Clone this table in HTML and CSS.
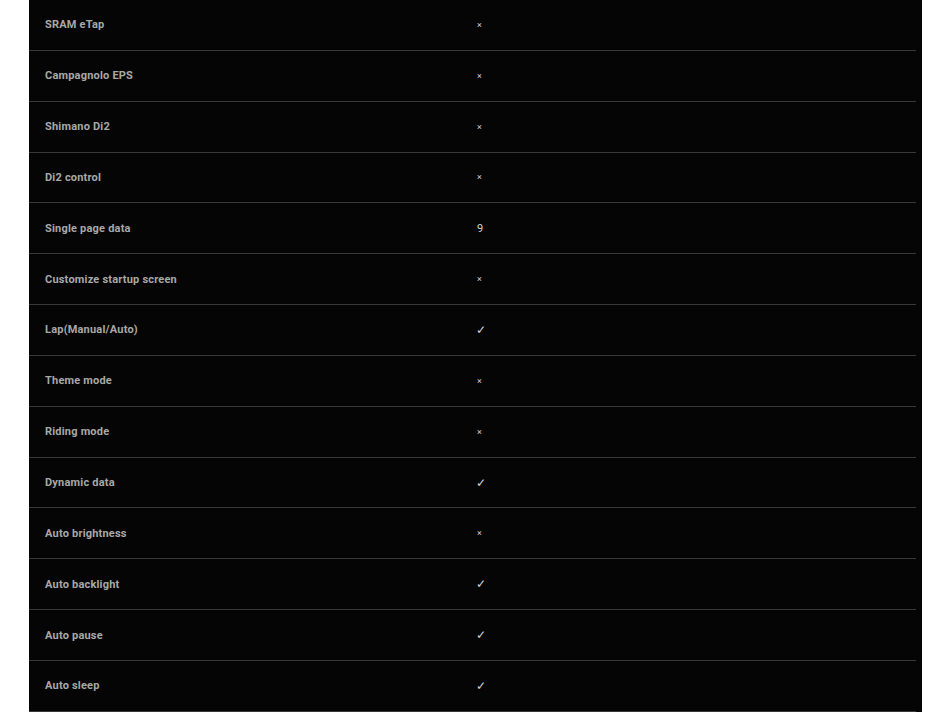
FILE: index.html
```html
<!DOCTYPE html>
<html lang="en">
<head>
    <meta charset="utf-8">
    <link rel="stylesheet" href="styles.css">
</head>
<body>
    <div class="spec-panel">
        <div class="spec-row"><span class="spec-name">SRAM eTap</span><span class="spec-value no">×</span></div>
        <div class="spec-row"><span class="spec-name">Campagnolo EPS</span><span class="spec-value no">×</span></div>
        <div class="spec-row"><span class="spec-name">Shimano Di2</span><span class="spec-value no">×</span></div>
        <div class="spec-row"><span class="spec-name">Di2 control</span><span class="spec-value no">×</span></div>
        <div class="spec-row"><span class="spec-name">Single page data</span><span class="spec-value">9</span></div>
        <div class="spec-row"><span class="spec-name">Customize startup screen</span><span class="spec-value no">×</span></div>
        <div class="spec-row"><span class="spec-name">Lap(Manual/Auto)</span><span class="spec-value yes">✓</span></div>
        <div class="spec-row"><span class="spec-name">Theme mode</span><span class="spec-value no">×</span></div>
        <div class="spec-row"><span class="spec-name">Riding mode</span><span class="spec-value no">×</span></div>
        <div class="spec-row"><span class="spec-name">Dynamic data</span><span class="spec-value yes">✓</span></div>
        <div class="spec-row"><span class="spec-name">Auto brightness</span><span class="spec-value no">×</span></div>
        <div class="spec-row"><span class="spec-name">Auto backlight</span><span class="spec-value yes">✓</span></div>
        <div class="spec-row"><span class="spec-name">Auto pause</span><span class="spec-value yes">✓</span></div>
        <div class="spec-row"><span class="spec-name">Auto sleep</span><span class="spec-value yes">✓</span></div>
    </div>
</body>
</html>
```
FILE: styles.css
```css
body {
    margin: 0;
    background: #fff;
    font-family: Roboto, "Liberation Sans", sans-serif;
}

.spec-panel {
    margin: 0 28px 0 29px;
    padding-right: 6px;
    background: #050505;
    overflow: hidden;
}

.spec-row {
    display: flex;
    align-items: center;
    height: 49.85px;
    border-bottom: 1px solid #383838;
}

.spec-name {
    width: 432px;
    padding-left: 16px;
    font-size: 11px;
    font-weight: bold;
    letter-spacing: 0.2px;
    color: #a8a8a8;
}

.spec-value {
    font-size: 11px;
    color: #d0d0d0;
}

.spec-value.no {
    font-size: 9px;
}

.spec-value.yes {
    font-size: 12px;
    margin-left: -1px;
}
```
